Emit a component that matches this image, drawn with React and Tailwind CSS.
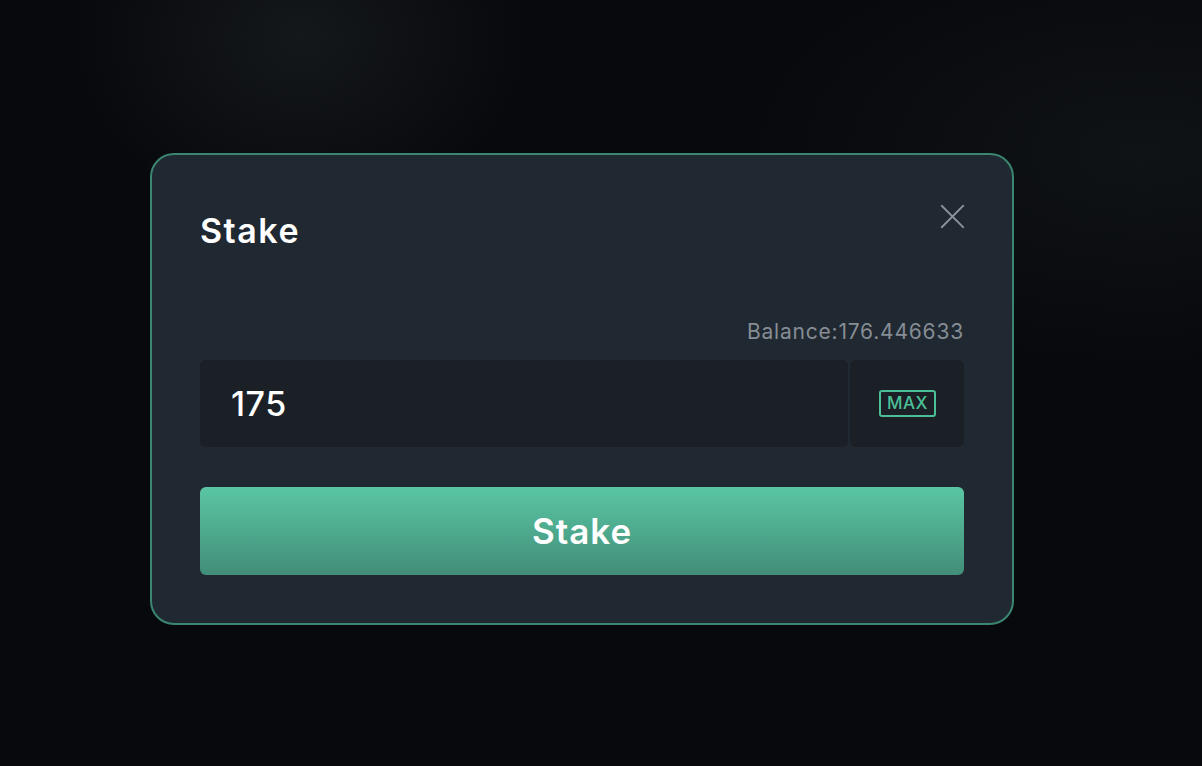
import React, { useState } from 'react';

const FONT = { fontFamily: 'Inter, "Noto Sans", sans-serif' };

const CloseIcon = () => (
  <svg width="25" height="25" viewBox="0 0 26 26" fill="none" stroke="currentColor" strokeWidth="2" strokeLinecap="square">
    <path d="M2 2 L24 24 M24 2 L2 24" />
  </svg>
);

export default function App() {
  const [amount, setAmount] = useState('175');
  const balance = '176.446633';

  return (
    <div
      className="w-full h-[766px] overflow-hidden bg-[#07090c] bg-[radial-gradient(ellipse_at_25%_5%,#15181b_0%,transparent_18%),radial-gradient(ellipse_at_95%_20%,#101315_0%,transparent_25%)] pt-[153px] pl-[150px]"
      style={FONT}
    >
      <div className="w-[864px] h-[472px] rounded-[24px] border-2 border-[#3a8670] bg-[#202831] px-[48px] pt-[54px] flex flex-col">
        <div className="flex items-start justify-between">
          <h2 className="text-[34px] leading-[44px] font-semibold text-white tracking-[1.5px]">Stake</h2>
          <button type="button" className="mt-[-5px] mr-[-1px] text-[#8b929a]">
            <CloseIcon />
          </button>
        </div>

        <div className="mt-[66px] text-right text-[21px] leading-[26px] text-[#868d95] tracking-[0.8px]">
          Balance:{balance}
        </div>

        <div className="mt-[15px] flex h-[87px] gap-[2px]">
          <input
            value={amount}
            onChange={(e) => setAmount(e.target.value)}
            className="flex-1 min-w-0 rounded-[6px] bg-[#1b2026] px-[31px] text-[34px] font-medium text-white outline-none tracking-[0.5px]"
          />
          <div className="w-[114px] rounded-[6px] bg-[#1b2026] flex items-center justify-center pl-[1px]">
            <button
              type="button"
              onClick={() => setAmount(balance)}
              className="h-[27px] px-[6px] rounded-[3px] border-2 border-[#4cbf98] text-[#4cbf98] text-[17px] leading-none font-medium tracking-[0.5px]"
            >
              MAX
            </button>
          </div>
        </div>

        <button
          type="button"
          className="mt-[40px] h-[88px] w-full rounded-[6px] bg-gradient-to-b from-[#5ac6a4] to-[#428e78] text-white text-[35px] font-semibold tracking-[1px]"
        >
          Stake
        </button>
      </div>
    </div>
  );
}
